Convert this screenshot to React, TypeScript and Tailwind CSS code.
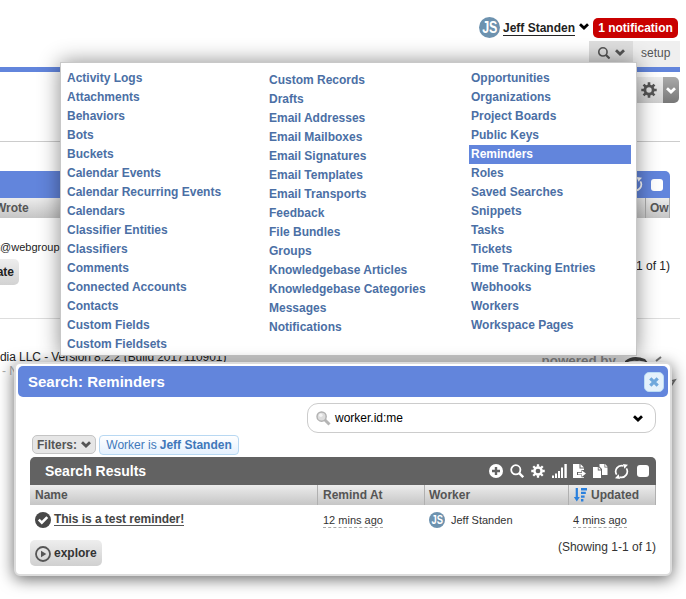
import React from "react";

const columns: string[][] = [
  ["Activity Logs", "Attachments", "Behaviors", "Bots", "Buckets", "Calendar Events", "Calendar Recurring Events", "Calendars", "Classifier Entities", "Classifiers", "Comments", "Connected Accounts", "Contacts", "Custom Fields", "Custom Fieldsets"],
  ["Custom Records", "Drafts", "Email Addresses", "Email Mailboxes", "Email Signatures", "Email Templates", "Email Transports", "Feedback", "File Bundles", "Groups", "Knowledgebase Articles", "Knowledgebase Categories", "Messages", "Notifications"],
  ["Opportunities", "Organizations", "Project Boards", "Public Keys", "Reminders", "Roles", "Saved Searches", "Snippets", "Tasks", "Tickets", "Time Tracking Entries", "Webhooks", "Workers", "Workspace Pages"],
];

function Chevron({ className = "" }: { className?: string }) {
  return (
    <svg viewBox="0 0 10 7" className={`h-[7px] w-[10px] shrink-0 ${className}`} fill="none" stroke="currentColor" strokeWidth="2.8">
      <path d="M1 1.2 5 5 9 1.2" />
    </svg>
  );
}

function Search({ className = "" }: { className?: string }) {
  return (
    <svg viewBox="0 0 14 14" className={`size-[14px] shrink-0 ${className}`} fill="none" stroke="currentColor">
      <circle cx="5.8" cy="5.8" r="4.6" strokeWidth="1.8" />
      <path d="m9.2 9.2 4 4" strokeWidth="2.4" />
    </svg>
  );
}

function Gear({ className = "" }: { className?: string }) {
  return (
    <svg viewBox="-8 -8 16 16" className={`shrink-0 ${className}`} fill="none" stroke="currentColor">
      <circle r="4.1" strokeWidth="2.8" />
      {[0, 45, 90, 135].map((a) => (
        <path key={a} d="M0-7.7V-4.8M0 7.7V4.8" strokeWidth="2.6" transform={`rotate(${a})`} />
      ))}
    </svg>
  );
}

function Refresh({ className = "" }: { className?: string }) {
  return (
    <svg viewBox="0 0 15 15" className={`size-[15px] shrink-0 ${className}`} fill="none" stroke="currentColor" strokeWidth="1.7">
      <path d="M2.6 10.6A5.9 5.9 0 0 1 9.4 1.9M12.4 4.4A5.9 5.9 0 0 1 5.6 13.1" />
      <path d="M9 0 14 .8 10.4 4.8zM6 15 1 14.2 4.6 10.2z" fill="currentColor" stroke="none" />
    </svg>
  );
}

function Avatar({ big = false }: { big?: boolean }) {
  return (
    <span className={`flex shrink-0 items-center justify-center overflow-hidden rounded-full bg-[#6d92af] text-white ${big ? "size-[21px] text-[16px]" : "size-[16px] text-[12px]"}`}>
      <span className="scale-x-[.78] font-bold leading-none">JS</span>
    </span>
  );
}

function Backdrop() {
  return (
    <div className="flex h-full flex-col">
      <div className="flex h-[41px] items-end justify-end pr-[8px] pb-[3px]">
        <Avatar big />
        <span className="ml-[3px] mb-[2px] border-b border-[#222] text-[12px] font-bold leading-[13px] text-[#222]">Jeff Standen</span>
        <Chevron className="ml-[4px] mb-[8px] text-black" />
        <span className="ml-[4px] flex h-[20px] w-[85px] items-center justify-center rounded-[5px] bg-[#c90000] text-[12px] font-bold text-white">1 notification</span>
      </div>
      <div className="flex h-[26px] justify-end pr-[6px] text-[#555]">
        <div className="flex w-[44px] items-center justify-center gap-[4px] bg-[#dedede] pb-[3px]">
          <Search className="scale-90" />
          <Chevron />
        </div>
        <div className="flex w-[47px] items-center bg-[#efefef] pb-[2px] pl-[8px] text-[12px]">setup</div>
      </div>
      <div className="mr-[6px] h-[5px] bg-[#6285dc]" />
      <div className="flex h-[69px] justify-end pt-[5px] pr-[7px]">
        <div className="flex h-[26px] w-[48px] items-center justify-center rounded-l-[5px] bg-linear-to-b from-[#eee] to-[#ccc] text-[#555]">
          <Gear className="ml-[20px] size-[16px]" />
        </div>
        <div className="flex h-[26px] w-[16px] items-center justify-center rounded-r-[5px] bg-linear-to-b from-[#aaa] to-[#777] text-white">
          <Chevron />
        </div>
      </div>
      <div className="mr-[6px] h-px bg-[#ccc]" />
      <div className="mt-[29px] mr-[16px] flex h-[27px] items-center justify-end rounded-tr-[5px] bg-[#6285dc] pr-[7px] text-white">
        <Refresh className="mr-[8px]" />
        <span className="size-[12px] rounded-[3px] bg-white" />
      </div>
      <div className="mr-[16px] flex h-[20px] items-center justify-between bg-linear-to-b from-[#ececec] to-[#c5c5c5] text-[12px] font-bold text-[#555]">
        <span className="-ml-[5px]">Wrote</span>
        <span className="flex h-full w-[25px] items-center overflow-hidden border-x border-[#aaa] pl-[4px]">Ow</span>
      </div>
      <div className="mr-[16px] flex h-[100px] justify-between text-[#222]">
        <div className="flex flex-col pt-[22px]">
          <span className="-ml-[3px] text-[11px] leading-[14px]">t@webgroup</span>
          <span className="mt-[5px] -ml-[5px] flex h-[26px] w-[24px] items-center justify-end rounded-r-[5px] bg-linear-to-b from-[#eee] to-[#d2d2d2] pr-[5px] text-[12px] font-bold">ate</span>
        </div>
        <span className="pt-[39px] text-[12px]">1 of 1)</span>
      </div>
      <div className="mr-[6px] h-px bg-[#ddd]" />
      <div className="flex justify-between pt-[31px]">
        <div className="whitespace-nowrap text-[12px] leading-[14px] text-[#222]">
          <div className="tracking-[-0.07px]">dia LLC - Version 8.2.2 (Build 2017110901)</div>
          <div className="pl-[2px] text-[#aaa]">- No</div>
        </div>
        <div className="flex pr-[8px] text-[#999]">
          <span className="mt-[3px] text-[13.4px] font-bold leading-[16px]">powered by</span>
          <svg viewBox="0 0 54 38" className="ml-[8px] h-[38px] w-[54px]" fill="none" stroke="#777">
            <path d="M1 11q8-7 20-2l4 5q-6-4-12-3-5-1-12 2z" fill="#444" stroke="none" />
            <path d="m32 11 5-4" strokeWidth="2" />
            <path d="m47 36 4-6-4 1" strokeWidth="1.6" />
          </svg>
        </div>
      </div>
    </div>
  );
}

function Menu() {
  return (
    <div className="absolute top-[62px] left-[60px] flex h-[294px] w-[577px] border border-[#c8c8c8] bg-white pt-[6px] pl-[5px] text-[12px] font-bold leading-[19px] text-[#4b6fa5] shadow-[0_0_20px_rgba(0,0,0,0.45)]">
      {columns.map((items, i) => (
        <ul key={i} className={i === 0 ? "w-[202px] shrink-0" : i === 1 ? "w-[202px] shrink-0 pt-[2px]" : "w-[164px] shrink-0"}>
          {items.map((t) => (
            <li key={t} className={t === "Reminders" ? "-ml-px w-[162px] bg-[#6285dc] pl-[2px] text-white" : "pl-px"}>{t}</li>
          ))}
        </ul>
      ))}
    </div>
  );
}

function Toolbar() {
  return (
    <div className="flex items-center text-white">
      <svg viewBox="0 0 14 14" className="size-[14px]">
        <circle cx="7" cy="7" r="7" fill="white" />
        <path d="M7 3v8M3 7h8" stroke="#626262" strokeWidth="2.4" />
      </svg>
      <Search className="ml-[7px]" />
      <Gear className="ml-[7px] size-[14px]" />
      <svg viewBox="0 0 15 14" className="ml-[7px] h-[14px] w-[15px]" fill="white">
        <path d="M0 11.5h2V14H0zM3 9.5h2V14H3zM6 7h2v7H6zM9 3.5h2V14H9zM12.4 0h2.4v14h-2.4z" />
      </svg>
      <svg viewBox="0 0 14 14" className="ml-[6px] size-[14px]" fill="white">
        <path d="M0 0h6.5v4.5H11V6H8.5v2H4v3h4.5v2.2H11V14H0zM7.5 0 11 3.5H7.5z" />
        <path d="M5 8.7h4V6.4l4 3.2-4 3.2v-2.3H5z" />
      </svg>
      <svg viewBox="0 0 15 14" className="ml-[6px] h-[14px] w-[15px]" fill="white">
        <path d="M0 3h4.8v3.5H8V14H0zM5.6 3 8 5.5H5.6zM6.5 0h5v3.5h3V11H9V5L6.5 2.4zM12.2 0l2.4 2.7h-2.4z" />
      </svg>
      <Refresh className="ml-[6px]" />
      <span className="ml-[8px] size-[12px] rounded-[3px] bg-white" />
    </div>
  );
}

function Dialog() {
  return (
    <div className="absolute top-[362px] left-[14px] flex h-[214px] w-[658px] flex-col rounded-[6px] border-2 border-[#dcdcdc] bg-white p-[2px] text-[12px] text-[#333] shadow-[0_3px_16px_rgba(0,0,0,0.6)]">
      <div className="flex h-[31px] shrink-0 items-center justify-between rounded-[5px] bg-[#6285dc] pr-[4px] pl-[10px] text-[15px] font-bold text-white">
        <span className="pt-[2px]">Search: Reminders</span>
        <span className="flex size-[20px] items-center justify-center rounded-[5px] border border-[#bcdcf5] bg-[#e4f1fb]">
          <svg viewBox="0 0 10 10" className="size-[10px]" stroke="#6fa8dc" strokeWidth="3.2"><path d="m1.3 1.3 7.4 7.4M8.7 1.3 1.3 8.7" /></svg>
        </span>
      </div>
      <div className="mt-[6px] mr-[12px] flex h-[30px] w-[349px] shrink-0 items-center self-end rounded-[11px] border border-[#ccc] pr-[12px] pl-[8px] text-black">
        <svg viewBox="0 0 15 15" className="size-[15px]">
          <path d="m8.5 8.5 5 5" stroke="#b5b5b5" strokeWidth="3" />
          <circle cx="5.6" cy="5.6" r="4.6" fill="#ddd" stroke="#b0b0b0" strokeWidth="1.4" />
          <circle cx="4.8" cy="4.2" r="1.8" fill="#f4f4f4" />
        </svg>
        <span className="ml-[4px] flex-1">worker.id:me</span>
        <Chevron />
      </div>
      <div className="mt-[2px] ml-[14px] flex shrink-0 gap-[3px]">
        <div className="flex h-[19px] w-[64px] items-center justify-center gap-[4px] rounded-[5px] border border-[#c4c4c4] bg-[#e6e6e6] font-bold text-[#555]">
          Filters:<Chevron />
        </div>
        <div className="flex h-[20px] w-[140px] items-center justify-center gap-[3px] rounded-[4px] border border-[#b8d8f2] bg-linear-to-b from-white to-[#e4f0fd] whitespace-nowrap text-[#3f78ba]">
          Worker is <b>Jeff Standen</b>
        </div>
      </div>
      <div className="mt-[2px] mr-[12px] ml-[12px] shrink-0">
        <div className="flex h-[28px] items-center justify-between rounded-t-[5px] bg-[#626262] pr-[7px] pl-[15px] text-[14px] font-bold text-white">
          <span>Search Results</span>
          <Toolbar />
        </div>
        <div className="grid h-[20px] grid-cols-[287px_107px_144px_88px] bg-linear-to-b from-[#ececec] to-[#c6c6c6] font-bold leading-[20px] text-[#555]">
          <span className="pl-[5px]">Name</span>
          <span className="border-l border-[#b0b0b0] pl-[5px]">Remind At</span>
          <span className="border-l border-[#b0b0b0] pl-[4px]">Worker</span>
          <span className="flex items-center border-x border-[#b0b0b0] pl-[5px]">
            <svg viewBox="0 0 13 14" className="mr-[4px] h-[14px] w-[13px]" fill="#2a80dd">
              <path d="M1.7 0h2.2v9h1.9L2.8 13.5-.2 9h1.9zM7 0h6v2.4H7zM7 3.7h4.8v2.4H7zM7 7.4h3.6v2.4H7zM7 11.1h2.4v2.4H7z" />
            </svg>
            Updated
          </span>
        </div>
        <div className="grid h-[30px] grid-cols-[287px_107px_144px_88px] items-center text-[11px]">
          <span className="flex items-center pl-[5px]">
            <svg viewBox="0 0 16 16" className="size-[16px]">
              <circle cx="8" cy="8" r="8" fill="#484848" />
              <path d="m3.8 7.7 3 3 5.5-5.6" fill="none" stroke="white" strokeWidth="2.6" />
            </svg>
            <span className="mb-[1px] ml-[3px] border-b border-[#555] text-[12px] font-bold leading-[12px] tracking-[-0.05px] text-[#444]">This is a test reminder!</span>
          </span>
          <span className="mt-[2px] ml-[6px] justify-self-start border-b border-dashed border-[#aaa] leading-[13px]">12 mins ago</span>
          <span className="flex items-center gap-[6px] pl-[5px]"><Avatar /><span>Jeff Standen</span></span>
          <span className="mt-[2px] ml-[5px] justify-self-start border-b border-dashed border-[#aaa] leading-[13px]">4 mins ago</span>
        </div>
        <div className="mt-[5px] flex items-start justify-between">
          <span className="flex h-[26px] w-[72px] items-center rounded-[5px] bg-linear-to-b from-[#eee] to-[#d0d0d0] pl-[5px] font-bold text-[#333]">
            <svg viewBox="0 0 16 16" className="mt-[1px] mr-[3px] size-[16px]">
              <circle cx="8" cy="8" r="7" fill="none" stroke="#555" strokeWidth="1.8" />
              <path d="m6 4.7 5.3 3.3L6 11.3z" fill="#555" />
            </svg>
            explore
          </span>
          <span className="leading-[14px]">(Showing 1-1 of 1)</span>
        </div>
      </div>
    </div>
  );
}

export default function App() {
  return (
    <main className="relative h-[599px] w-[686px] overflow-hidden bg-white font-['Helvetica_Neue','Liberation_Sans',sans-serif]">
      <Backdrop />
      <Menu />
      <Dialog />
    </main>
  );
}
